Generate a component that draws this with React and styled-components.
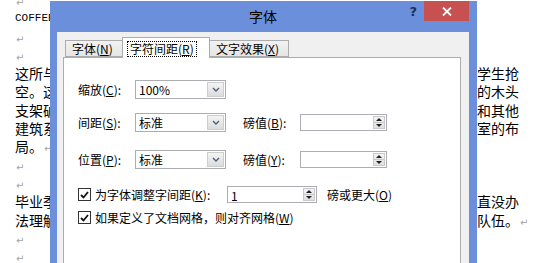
import React from 'react';
import styled, {createGlobalStyle} from 'styled-components';

const GlobalStyle = createGlobalStyle`
    html, body{
        margin: 0;
        padding: 0;
        background: #fff;
        overflow: hidden;
    }
    body{
        font-family: "Noto Sans CJK SC", "DejaVu Sans", sans-serif;
    }
`;

const Page = styled.div`
    position: relative;
    width: 545px;
    height: 263px;
    overflow: hidden;
    background: #fff;
`;

const Doc = styled.div`
    display: flex;
    flex-direction: column;
    margin-top: -9px;
    padding-left: 15px;
`;

const DocLine = styled.div`
    height: 18.3px;
    line-height: 18.3px;
    font-size: ${p=>p.$latin ? 11 : 14}px;
    color: #000;
    white-space: nowrap;
    font-family: ${p=>p.$latin ? '"Liberation Mono", monospace' : '"Noto Sans CJK SC", sans-serif'};
`;

const Mark = styled.span`
    font-family: "DejaVu Sans", sans-serif;
    font-size: 10px;
    color: #a3a3a3;
    margin-left: 1px;
`;

const Dialog = styled.div`
    position: absolute;
    left: 50px;
    top: 1px;
    width: 427px;
    height: 300px;
    box-sizing: border-box;
    padding: 0 8px 0 7px;
    background: #6b8fdb;
    display: flex;
    flex-direction: column;
    font-family: "Noto Sans CJK SC", sans-serif;
    font-size: 12px;
    color: #000;
`;

const TitleBar = styled.div`
    height: 31px;
    display: grid;
    grid-template-columns: 1fr auto 1fr;
    align-items: start;
`;

const Title = styled.div`
    grid-column: 2;
    font-size: 14px;
    line-height: 30px;
`;

const TitleButtons = styled.div`
    grid-column: 3;
    display: flex;
    justify-content: flex-end;
    align-items: flex-start;
`;

const Help = styled.div`
    font-family: "DejaVu Sans", sans-serif;
    font-weight: bold;
    font-size: 13px;
    line-height: 22px;
    color: #1b2f5c;
    margin-right: 7px;
`;

const Close = styled.div`
    width: 45px;
    height: 20px;
    background: #c75050;
    display: flex;
    align-items: center;
    justify-content: center;
`;

const Client = styled.div`
    flex: 1;
    background: #f0f0f0;
    padding: 5px 8px 0 6px;
    display: flex;
    flex-direction: column;
`;

const TabStrip = styled.div`
    height: 20px;
    display: flex;
    align-items: flex-end;
    padding-left: 2px;
`;

const Tab = styled.div`
    box-sizing: border-box;
    width: ${p=>p.$width}px;
    height: ${p=>p.$active ? 21 : 17}px;
    margin-bottom: ${p=>p.$active ? -1 : 0}px;
    margin-left: ${p=>p.$active ? -1 : 0}px;
    margin-right: ${p=>p.$active ? -1 : 0}px;
    position: relative;
    z-index: ${p=>p.$active ? 2 : 1};
    border: 1px solid #acacac;
    border-bottom: ${p=>p.$active ? 'none' : '1px solid #acacac'};
    background: ${p=>p.$active ? '#fff' : 'linear-gradient(#f2f2f2, #e5e5e5)'};
    display: flex;
    align-items: ${p=>p.$active ? 'flex-start' : 'center'};
    padding: ${p=>p.$active ? '3px 0 0 4px' : '0 0 0 6px'};
    line-height: 14px;
    white-space: nowrap;
`;

const Focus = styled.span`
    border: 1px dotted #000;
    padding: 0 2px;
`;

const Panel = styled.div`
    flex: 1;
    background: #fff;
    border: 1px solid #acacac;
    padding: 22px 0 0 14px;
    display: flex;
    flex-direction: column;
`;

const FieldRow = styled.div`
    display: flex;
    align-items: center;
    height: 19px;
    margin-bottom: ${p=>p.$gap || 0}px;
`;

const Label = styled.div`
    width: ${p=>p.$width || 57}px;
    margin-left: ${p=>p.$offset || 0}px;
    white-space: nowrap;
    line-height: 16px;
`;

const ComboBox = styled.div`
    box-sizing: border-box;
    width: 91px;
    height: 19px;
    border: 1px solid #abadb3;
    background: #fff;
    display: flex;
    align-items: stretch;
`;

const FieldText = styled.div`
    flex: 1;
    padding-left: 3px;
    line-height: 17px;
`;

const DropButton = styled.div`
    box-sizing: border-box;
    width: 17px;
    margin: 1px;
    background: linear-gradient(#f4f4f4, #dcdcdc);
    border: 1px solid #cdcdcd;
    display: flex;
    align-items: center;
    justify-content: center;
`;

const SpinBox = styled.div`
    box-sizing: border-box;
    width: ${p=>p.$width}px;
    height: 17px;
    border: 1px solid #abadb3;
    background: #fff;
    display: flex;
    align-items: stretch;
`;

const SpinButtons = styled.div`
    box-sizing: border-box;
    width: 12px;
    margin: 1px;
    border: 1px solid #c9c9c9;
    background: linear-gradient(#f3f3f3, #e0e0e0);
    display: flex;
    flex-direction: column;
`;

const SpinHalf = styled.div`
    flex: 1;
    display: flex;
    align-items: center;
    justify-content: center;
    border-top: ${p=>p.$lower ? '1px solid #c9c9c9' : 'none'};
`;

const CheckRow = styled.div`
    display: flex;
    align-items: center;
    height: 17px;
    margin-top: ${p=>p.$gap}px;
`;

const Box = styled.div`
    box-sizing: border-box;
    width: 13px;
    height: 13px;
    border: 1px solid #333;
    background: #fff;
    display: flex;
    align-items: center;
    justify-content: center;
    margin-right: 4px;
`;

const CheckLabel = styled.div`
    width: ${p=>p.$width ? `${p.$width}px` : 'auto'};
    white-space: nowrap;
    line-height: 16px;
`;

const After = styled.div`
    margin-left: 10px;
    white-space: nowrap;
`;

const Chevron = ()=>(
    <svg width="8" height="5" viewBox="0 0 8 5">
        <path d="M1 1 L4 4 L7 1" fill="none" stroke="#4b5f80" strokeWidth="1.4"/>
    </svg>
);

const Combo = ({value})=>(
    <ComboBox>
        <FieldText>{value}</FieldText>
        <DropButton><Chevron/></DropButton>
    </ComboBox>
);

const Spin = ({value, width})=>(
    <SpinBox $width={width}>
        <FieldText>{value}</FieldText>
        <SpinButtons>
            <SpinHalf>
                <svg width="6" height="3" viewBox="0 0 6 3"><polygon points="0,3 3,0 6,3" fill="#222"/></svg>
            </SpinHalf>
            <SpinHalf $lower>
                <svg width="6" height="3" viewBox="0 0 6 3"><polygon points="0,0 6,0 3,3" fill="#222"/></svg>
            </SpinHalf>
        </SpinButtons>
    </SpinBox>
);

const Check = ()=>(
    <Box>
        <svg width="9" height="8" viewBox="0 0 9 8">
            <path d="M1 4 L3.5 6.5 L8 1" fill="none" stroke="#111" strokeWidth="1.8"/>
        </svg>
    </Box>
);

const lines = [
    {text: ''},
    {text: 'COFFEE HOUSE', latin: true, mark: true},
    {text: ''},
    {text: ''},
    {text: '这所与咖啡馆同名的老礼堂曾是全校最热闹的地方，每逢周末总会有许多大学生抢'},
    {text: '空。这座建筑的屋顶是由几十根已经有上百年历史、早已被虫蛀得很不安全的木头'},
    {text: '支架破损严重，学校曾多次请来建筑方面的专家对它进行检测，结论却总是和其他'},
    {text: '建筑系的学生们也曾经多次提出过改造方案，希望能够保留原有的风格和教室的布'},
    {text: '局。', mark: true},
    {text: ''},
    {text: ''},
    {text: '毕业季到来的时候，很多人都想为这座老房子做些什么，可惜大家的想法一直没办'},
    {text: '法理解这份坚持，直到后来一群刚刚入学的新生主动地加入了修缮老礼堂的队伍。', mark: true},
    {text: ''},
    {text: ''},
];

export default function App(){
    return(
        <Page>
            <GlobalStyle/>
            <Doc>
                {lines.map((line, i)=>(
                    <DocLine key={i} $latin={line.latin}>
                        {line.text}
                        {(line.mark || line.text === '') && <Mark>↵</Mark>}
                    </DocLine>
                ))}
            </Doc>
            <Dialog>
                <TitleBar>
                    <Title>字体</Title>
                    <TitleButtons>
                        <Help>?</Help>
                        <Close>
                            <svg width="10" height="9" viewBox="0 0 10 9">
                                <path d="M1 0.5 L9 8.5 M9 0.5 L1 8.5" stroke="#fff" strokeWidth="1.8"/>
                            </svg>
                        </Close>
                    </TitleButtons>
                </TitleBar>
                <Client>
                    <TabStrip>
                        <Tab $width={58}>字体(<u>N</u>)</Tab>
                        <Tab $width={88} $active><Focus>字符间距(<u>R</u>)</Focus></Tab>
                        <Tab $width={80}>文字效果(<u>X</u>)</Tab>
                    </TabStrip>
                    <Panel>
                        <FieldRow $gap={14}>
                            <Label>缩放(<u>C</u>):</Label>
                            <Combo value="100%"/>
                        </FieldRow>
                        <FieldRow $gap={18}>
                            <Label>间距(<u>S</u>):</Label>
                            <Combo value="标准"/>
                            <Label $offset={17}>磅值(<u>B</u>):</Label>
                            <Spin width={87}/>
                        </FieldRow>
                        <FieldRow>
                            <Label>位置(<u>P</u>):</Label>
                            <Combo value="标准"/>
                            <Label $offset={17}>磅值(<u>Y</u>):</Label>
                            <Spin width={87}/>
                        </FieldRow>
                        <CheckRow $gap={17}>
                            <Check/>
                            <CheckLabel $width={132}>为字体调整字间距(<u>K</u>):</CheckLabel>
                            <Spin value="1" width={90}/>
                            <After>磅或更大(<u>O</u>)</After>
                        </CheckRow>
                        <CheckRow $gap={6}>
                            <Check/>
                            <CheckLabel>如果定义了文档网格，则对齐网格(<u>W</u>)</CheckLabel>
                        </CheckRow>
                    </Panel>
                </Client>
            </Dialog>
        </Page>
    );
}
